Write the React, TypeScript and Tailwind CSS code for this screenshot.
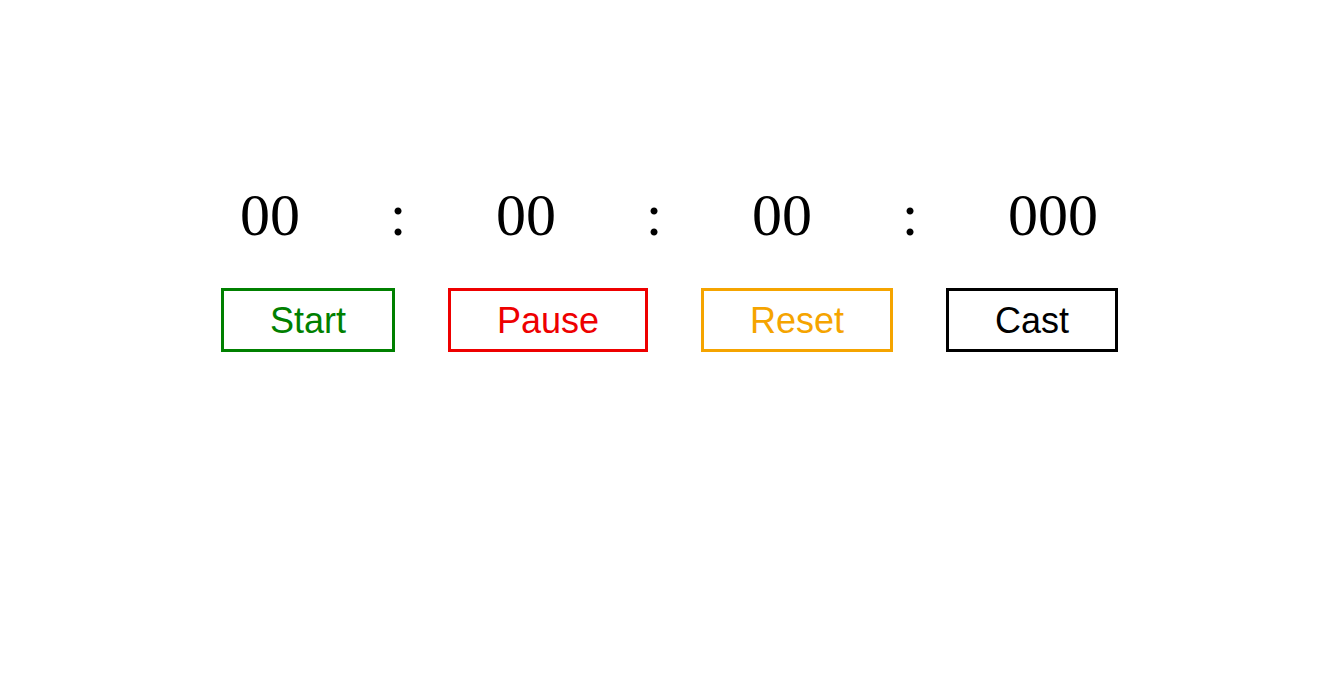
import { useState } from 'react';

const serif = { fontFamily: '"Liberation Serif", "Times New Roman", serif' };

function Sep() {
  return <span className="w-[17px] text-center">:</span>;
}

export default function App() {
  const [time] = useState({ h: '00', m: '00', s: '00', ms: '000' });

  const buttons = [
    { label: 'Start', cls: 'border-[#008000] text-[#008000]' },
    { label: 'Pause', cls: 'border-[#ee0000] text-[#ee0000]' },
    { label: 'Reset', cls: 'border-[#f5a400] text-[#f5a400]' },
    { label: 'Cast', cls: 'border-black text-black' },
  ];

  return (
    <div className="min-h-[688px] w-full bg-white pt-[179px]">
      <div
        className="flex justify-center gap-[89.5px] text-[60px] leading-[72px] text-black pl-[3px]"
        style={serif}
      >
        <span>{time.h}</span>
        <Sep />
        <span>{time.m}</span>
        <Sep />
        <span>{time.s}</span>
        <Sep />
        <span>{time.ms}</span>
      </div>
      <div
        className="mt-[37px] flex justify-center gap-[53px] pl-[4px]"
        style={{ fontFamily: '"Liberation Sans", Arial, sans-serif' }}
      >
        {buttons.map((b) => (
          <button
            key={b.label}
            type="button"
            className={`border-[3px] bg-white px-[46px] pt-[9px] pb-[7px] text-[36px] leading-[42px] ${b.cls}`}
          >
            {b.label}
          </button>
        ))}
      </div>
    </div>
  );
}
